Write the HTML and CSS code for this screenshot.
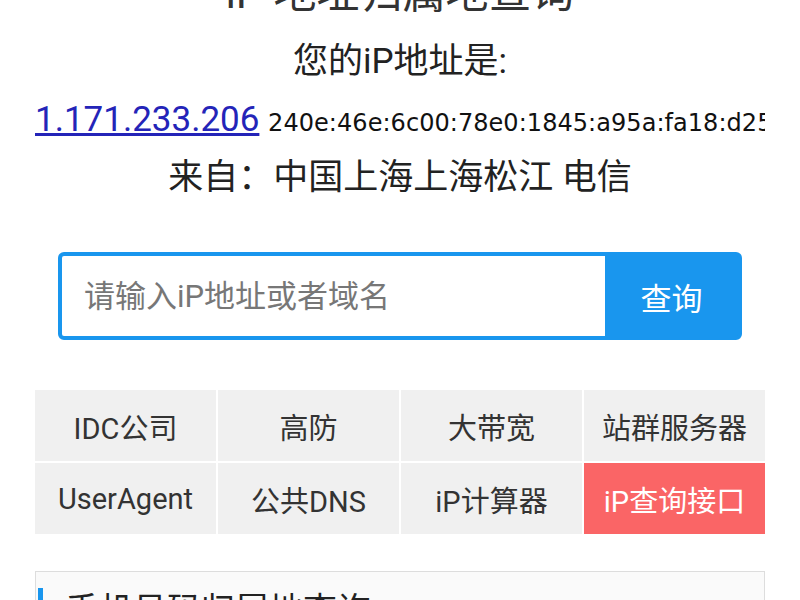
FILE: index.html
```html
<!DOCTYPE html>
<html lang="zh-CN">
<head>
<meta charset="utf-8">
<title>iP 地址归属地查询</title>
<link rel="stylesheet" href="styles.css">
</head>
<body>
<div class="page">
  <h1 class="title">iP 地址归属地查询</h1>
  <p class="line">您的iP地址是:</p>
  <p class="line ip-row"><a class="ipv4" href="#">1.171.233.206</a> <span class="ipv6">240e:46e:6c00:78e0:1845:a95a:fa18:d25f</span></p>
  <p class="line">来自：中国上海上海松江 电信</p>

  <form class="search">
    <input class="search-input" type="text" placeholder="请输入iP地址或者域名">
    <button class="search-btn" type="button">查询</button>
  </form>

  <div class="grid">
    <a class="cell" href="#">IDC公司</a>
    <a class="cell" href="#">高防</a>
    <a class="cell" href="#">大带宽</a>
    <a class="cell" href="#">站群服务器</a>
    <a class="cell" href="#">UserAgent</a>
    <a class="cell" href="#">公共DNS</a>
    <a class="cell" href="#">iP计算器</a>
    <a class="cell cell-hot" href="#">iP查询接口</a>
  </div>

  <div class="card">
    <h2 class="card-title">手机号码归属地查询</h2>
  </div>
</div>
</body>
</html>
```

FILE: styles.css
```css
* { box-sizing: border-box; }
html, body { margin: 0; padding: 0; background: #fff; overflow: hidden; }
body {
  font-family: Roboto, "Noto Sans CJK SC", sans-serif;
  color: #222;
}
.page {
  width: 730px;
  margin: 0 auto;
}
.title {
  margin: -36px 0 11px;
  font-size: 43px;
  font-weight: 400;
  line-height: 58px;
  height: 58px;
  text-align: center;
  color: #333;
  white-space: nowrap;
}
.line {
  margin: 0;
  font-size: 35px;
  line-height: 58px;
  height: 58px;
  text-align: center;
  white-space: nowrap;
}
.ip-row {
  text-align: left;
  overflow: hidden;
}
.ipv4 {
  font-size: 35px;
  color: #2424b8;
  text-decoration: underline;
}
.ipv6 {
  font-family: "DejaVu Sans", sans-serif;
  font-size: 24px;
  letter-spacing: 0.05px;
  color: #111;
}
.search {
  display: flex;
  width: 684px;
  height: 88px;
  margin: 45px auto 0;
  border: 4px solid #1996ee;
  border-radius: 6px;
  background: #1996ee;
  overflow: hidden;
}
.search-input {
  flex: 1;
  min-width: 0;
  border: 0;
  margin: 0;
  padding: 0 0 0 22px;
  font-family: Roboto, "Noto Sans CJK SC", sans-serif;
  font-size: 31px;
  color: #333;
  background: #fff;
  outline: none;
}
.search-input::placeholder { color: #777; }
.search-btn {
  width: 133px;
  border: 0;
  padding: 0;
  background: #1996ee;
  color: #fff;
  font-family: Roboto, "Noto Sans CJK SC", sans-serif;
  font-size: 31px;
}
.grid {
  display: grid;
  grid-template-columns: repeat(4, 1fr);
  grid-auto-rows: 71px;
  gap: 2px;
  margin: 50px 0 0;
}
.cell {
  display: flex;
  align-items: center;
  justify-content: center;
  background: #f0f0f0;
  color: #333;
  font-size: 29px;
  text-decoration: none;
  white-space: nowrap;
}
.cell-hot {
  background: #fa6566;
  color: #fff;
}
.card {
  margin-top: 37px;
  border: 1px solid #ddd;
  background: #fafafa;
  padding: 16px 0 0 2px;
  height: 200px;
}
.card-title {
  margin: 0;
  padding-left: 22px;
  border-left: 5px solid #1996ee;
  font-size: 34px;
  font-weight: 400;
  line-height: 44px;
  color: #222;
}
```
